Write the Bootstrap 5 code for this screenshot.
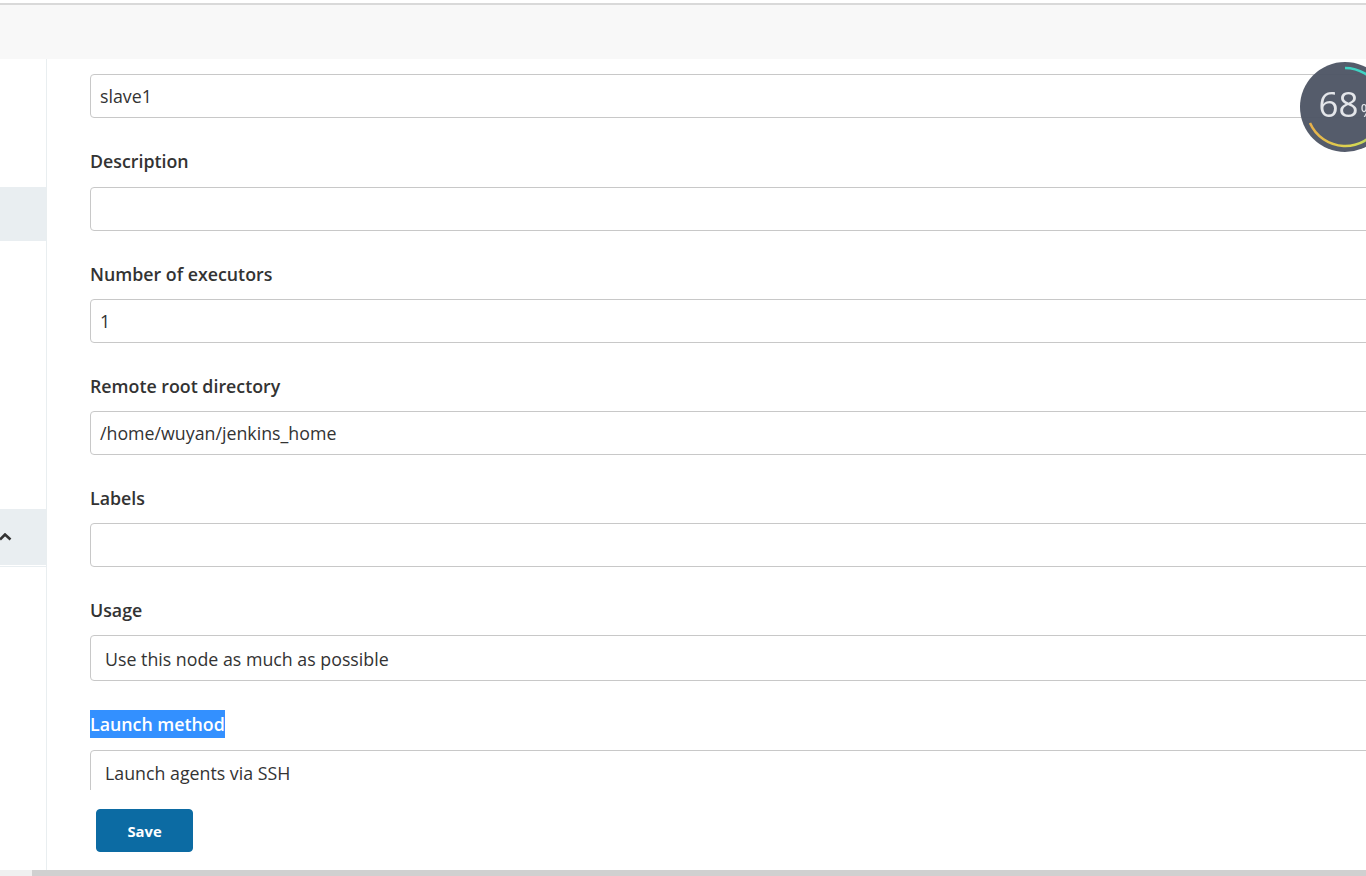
<!DOCTYPE html>
<html lang="en">
<head>
<meta charset="utf-8">
<title>Jenkins node</title>
<link href="https://cdn.jsdelivr.net/npm/bootstrap@5.3.0/dist/css/bootstrap.min.css" rel="stylesheet">
<style>
html,body{height:876px;overflow:hidden;background:#fff}
body{font-family:"Open Sans","Noto Sans",sans-serif;font-size:17.8px;color:#333;position:relative}
.shell{height:876px;width:1366px;overflow:hidden}
.topband{height:56px;background:#f8f8f8;border-top:2px solid #d9d9d9;margin-top:3px;flex:none}
.mainrow{height:817px;flex:none}
.sidecol{width:47px;flex:none;border-right:1px solid #e9eef0;padding-top:128px}
.sideitem{height:54px;background:#e9eef1}
.sideitem2{height:56px;margin-top:268px;background:#e9eef1;display:flex;align-items:center}
.sideline{height:1px;margin-top:1px;background:#e9eef1}
.formcol{width:1319px;flex:none}
.formclip{height:731px;overflow:hidden;padding:15px 0 0 43px}
.fieldgroup{margin-bottom:31px}
.fieldlast{margin-bottom:29px}
.fieldtitle{font-weight:600;font-size:17.8px;line-height:24px;margin-bottom:13px;color:#333;display:block}
.fieldfirst{margin-bottom:14px}
.fieldinput{width:1400px;height:44px;border:1px solid #c8c8c8;border-radius:4px;padding:0 9px;font-size:17.8px;color:#333;line-height:43px;background:#fff}
.fieldselect{height:46px;padding:0 14px;line-height:46px}
.fieldtall{height:60px;line-height:45px}
.selected{background:#3390ff;color:#fff;display:inline-block;line-height:28px;margin-bottom:12px;vertical-align:top}
.savebar{padding:19px 0 0 49px}
.savebtn{width:97px;height:43px;background:#0c6ba3;border-color:#0c6ba3;color:#fff;font-weight:700;font-size:14.8px;border-radius:4px;padding:2px 0 0}
.hscroll{height:6px;background:#f0f0f0;padding-left:32px;position:absolute;left:0;right:0;bottom:0}
.hthumb{height:6px;background:#d0d0d0}
.gauge{position:absolute;left:1299px;top:61px;width:92px;height:92px;filter:blur(.6px)}
.gaugetext{font-family:"Open Sans",sans-serif;font-size:35px;font-weight:400;fill:#e4e6ea}
.gaugepct{font-size:18px}
</style>
</head>
<body>
<div class="shell d-flex flex-column">
  <div class="topband"></div>
  <div class="mainrow d-flex">
    <div class="sidecol">
      <div class="sideitem"></div>
      <div class="sideitem2">
        <svg width="12" height="9" viewBox="0 0 12 9"><path d="M0 6.5 5 1.5 10.5 6.5" fill="none" stroke="#333" stroke-width="2.6"/></svg>
      </div>
      <div class="sideline"></div>
    </div>
    <div class="formcol">
      <div class="formclip">
        <div class="fieldgroup"><div class="form-control fieldinput">slave1</div></div>
        <div class="fieldgroup"><span class="form-label fieldtitle fieldfirst">Description</span><div class="form-control fieldinput"></div></div>
        <div class="fieldgroup"><span class="form-label fieldtitle">Number of executors</span><div class="form-control fieldinput">1</div></div>
        <div class="fieldgroup"><span class="form-label fieldtitle">Remote root directory</span><div class="form-control fieldinput">/home/wuyan/jenkins_home</div></div>
        <div class="fieldgroup"><span class="form-label fieldtitle">Labels</span><div class="form-control fieldinput"></div></div>
        <div class="fieldgroup fieldlast"><span class="form-label fieldtitle">Usage</span><div class="form-control fieldinput fieldselect">Use this node as much as possible</div></div>
        <div><span class="form-label fieldtitle selected">Launch method</span><div class="form-control fieldinput fieldselect fieldtall">Launch agents via SSH</div></div>
      </div>
      <div class="savebar"><button type="button" class="btn savebtn">Save</button></div>
    </div>
  </div>
</div>
<div class="hscroll"><div class="hthumb"></div></div>
<svg class="gauge" viewBox="0 0 92 92">
  <defs>
    <linearGradient id="arcgrad" x1="0" y1="0" x2="1" y2="0">
      <stop offset="0" stop-color="#e8b04a"/>
      <stop offset=".6" stop-color="#dcd650"/>
      <stop offset="1" stop-color="#a9d66a"/>
    </linearGradient>
  </defs>
  <circle cx="46" cy="46" r="45" fill="#4e5565" fill-opacity=".96"/>
  <path d="M46 7A39 39 0 0 1 80 27" fill="none" stroke="#3fd4c4" stroke-width="2.5"/>
  <path d="M11 62A38.5 38.5 0 0 0 80 65" fill="none" stroke="url(#arcgrad)" stroke-width="2.5"/>
  <text x="19.5" y="56" class="gaugetext">68<tspan class="gaugepct" dx="2">%</tspan></text>
</svg>
</body>
</html>
